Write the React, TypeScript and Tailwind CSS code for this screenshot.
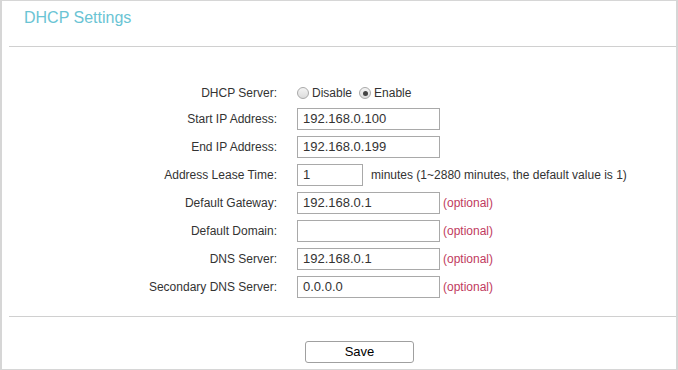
import React from "react";

type Field = {
  label: string;
  value: string;
  optional?: boolean;
  narrow?: boolean;
  note?: string;
};

const fields: Field[] = [
  { label: "Start IP Address:", value: "192.168.0.100" },
  { label: "End IP Address:", value: "192.168.0.199" },
  {
    label: "Address Lease Time:",
    value: "1",
    narrow: true,
    note: "minutes (1~2880 minutes, the default value is 1)",
  },
  { label: "Default Gateway:", value: "192.168.0.1", optional: true },
  { label: "Default Domain:", value: "", optional: true },
  { label: "DNS Server:", value: "192.168.0.1", optional: true },
  { label: "Secondary DNS Server:", value: "0.0.0.0", optional: true },
];

function Radio({ checked }: { checked?: boolean }) {
  return (
    <span className="w-[12px] h-[12px] rounded-full border border-[#a9a9a9] bg-gradient-to-b from-[#f4f4f4] to-[#dcdcdc] flex items-center justify-center">
      {checked && <span className="w-[5px] h-[5px] rounded-full bg-[#444]" />}
    </span>
  );
}

export default function App() {
  return (
    <div className="w-[678px] h-[370px] flex flex-col bg-white border-t border-b border-l-2 border-r-2 border-[#d6d6d6] font-['Liberation_Sans',Arial,sans-serif] text-[#333]">
      {/* Title */}
      <div className="h-[45px] pl-[22px] pt-[8px] text-[16px] leading-[18px] text-[#6ac4d4]">
        DHCP Settings
      </div>
      <div className="ml-[7px] border-t border-[#d0d0d0]" />

      {/* Form */}
      <div className="pt-[34px] flex flex-col">
        <div className="h-[24px] flex items-center text-[12px]">
          <div className="w-[275px] text-right">DHCP Server:</div>
          <div className="ml-[20px] flex items-center">
            <Radio />
            <span className="ml-[3px]">Disable</span>
            <span className="ml-[7px]">
              <Radio checked />
            </span>
            <span className="ml-[3px]">Enable</span>
          </div>
        </div>

        {fields.map((f) => (
          <div key={f.label} className="h-[28px] flex items-center text-[12px]">
            <div className="w-[275px] text-right">{f.label}</div>
            <div
              className={`ml-[20px] h-[22px] border border-[#a9a9a9] pl-[5px] flex items-center text-[13px] ${
                f.narrow ? "w-[66px]" : "w-[143px]"
              }`}
            >
              {f.value}
            </div>
            {f.note && <span className="ml-[8px]">{f.note}</span>}
            {f.optional && <span className="ml-[3px] text-[#bf3a60]">(optional)</span>}
          </div>
        ))}
      </div>

      <div className="mt-[15px] ml-[7px] border-t border-[#d0d0d0]" />

      {/* Actions */}
      <div className="pt-[24px] pl-[303px]">
        <button className="w-[109px] h-[22px] rounded-[3px] border border-[#a0a0a0] bg-white text-[13px] text-black flex items-center justify-center">
          Save
        </button>
      </div>
    </div>
  );
}
